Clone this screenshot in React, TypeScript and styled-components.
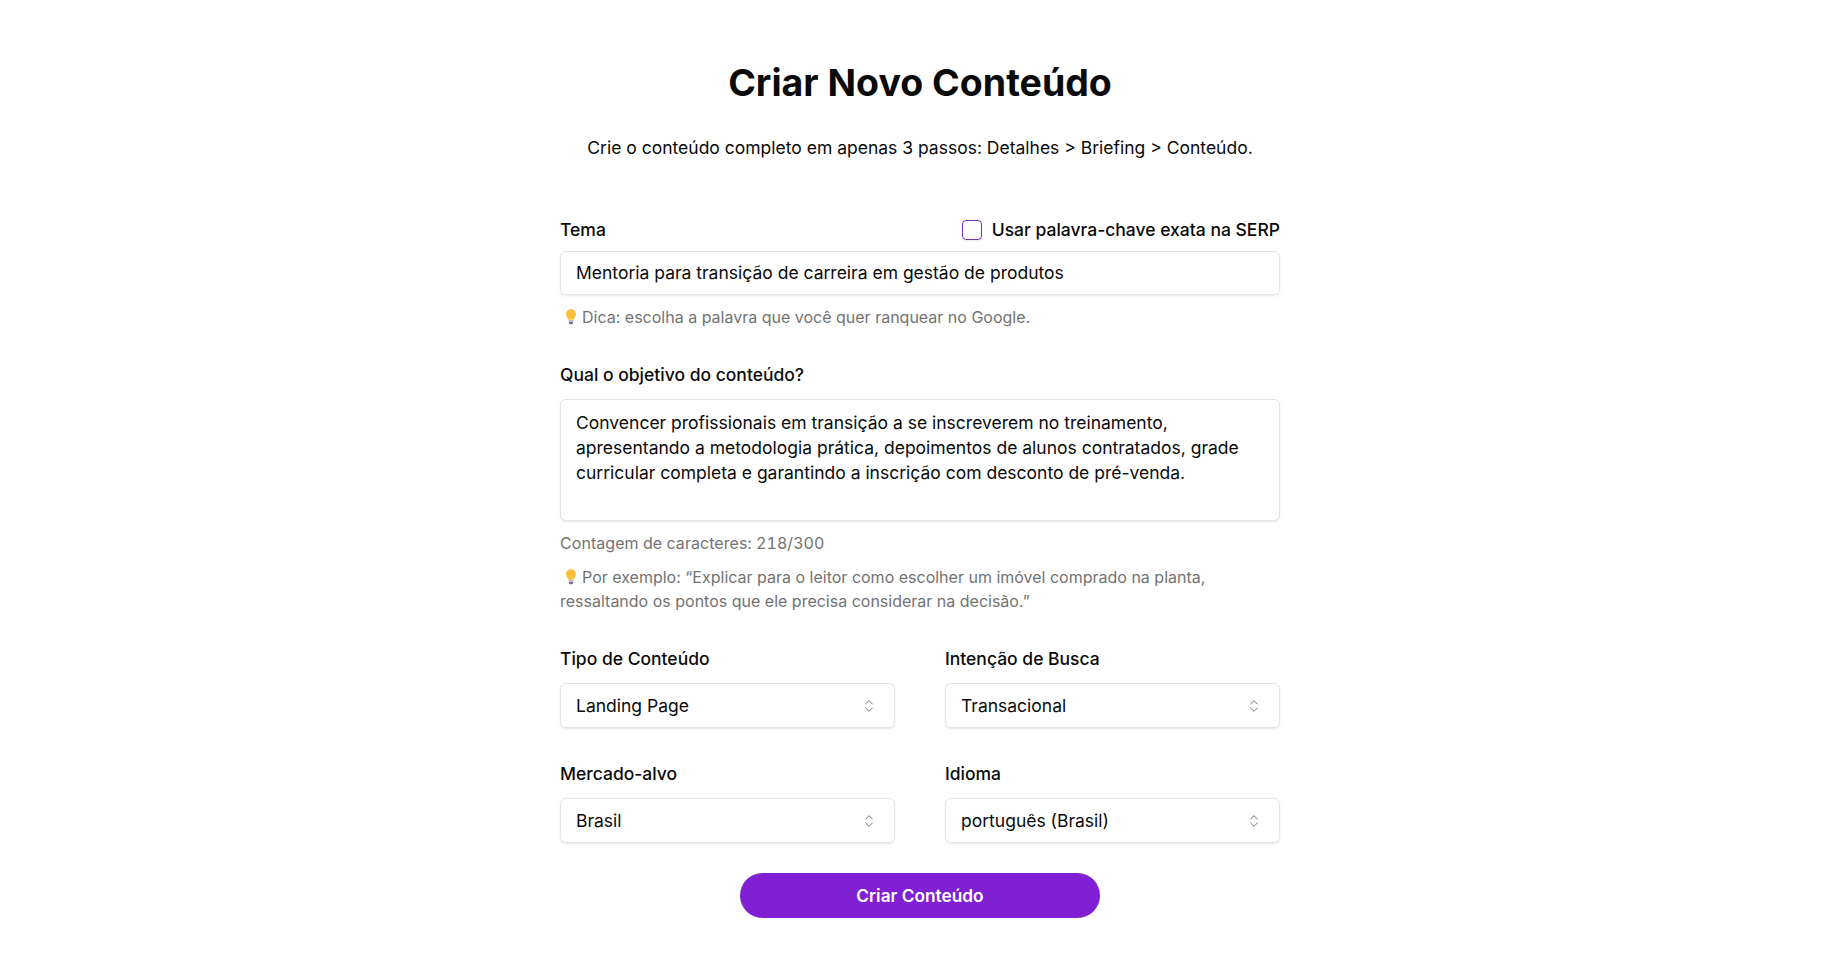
import React from 'react'
import styled, { createGlobalStyle } from 'styled-components'
import { ChevronsUpDown } from 'lucide-react'

const GlobalStyle = createGlobalStyle`
  * {
    box-sizing: border-box;
  }

  body {
    margin: 0;
    background: #fff;
    color: #0a0a0a;
    font-family: Inter, "Liberation Sans", sans-serif;
  }
`

const Page = styled.main`
  width: 720px;
  margin: 0 auto;
  padding-top: 63px;
`

const Title = styled.h1`
  margin: 0;
  font-size: 37.5px;
  line-height: 40px;
  font-weight: 700;
  text-align: center;
`

const Subtitle = styled.p`
  margin: 33px 0 0;
  font-size: 17.5px;
  line-height: 24px;
  text-align: center;
`

const Form = styled.form`
  display: flex;
  flex-direction: column;
  margin-top: 58px;
`

const Field = styled.div<{ $top?: number }>`
  margin-top: ${(p) => p.$top ?? 0}px;
  min-width: 0;
`

const LabelRow = styled.div`
  display: flex;
  align-items: center;
  justify-content: space-between;
  height: 24px;
`

const Label = styled.label`
  display: block;
  font-size: 17.5px;
  line-height: 24px;
  font-weight: 500;
`

const CheckWrap = styled.label`
  display: flex;
  align-items: center;
  gap: 10px;
  font-size: 17.5px;
  line-height: 24px;
  font-weight: 500;
`

const CheckBox = styled.span`
  width: 20px;
  height: 20px;
  border: 1.5px solid #7a35bd;
  border-radius: 4px;
  box-shadow: 0 1px 2px rgba(0, 0, 0, 0.08);
`

const TextInput = styled.input`
  display: block;
  width: 100%;
  height: 44px;
  margin-top: 9px;
  padding: 0 15px 2px;
  border: 1px solid #e5e5e5;
  border-radius: 6px;
  background: #fff;
  box-shadow: 0 1px 2px rgba(0, 0, 0, 0.1);
  color: #0a0a0a;
  font: 400 17.5px/24px Inter, "Liberation Sans", sans-serif;
  outline: none;
`

const TextArea = styled.textarea`
  display: block;
  width: 100%;
  height: 122px;
  margin-top: 12px;
  padding: 10px 15px;
  border: 1px solid #e5e5e5;
  border-radius: 6px;
  background: #fff;
  box-shadow: 0 1px 2px rgba(0, 0, 0, 0.1);
  color: #0a0a0a;
  font: 400 17.5px/25px Inter, "Liberation Sans", sans-serif;
  outline: none;
  resize: none;
`

const Hint = styled.p<{ $top: number }>`
  margin: ${(p) => p.$top}px 0 0;
  color: #737373;
  font-size: 16px;
  line-height: 24px;
`

const Counter = styled(Hint)`
  font-variant-numeric: tabular-nums;
  letter-spacing: 0.05px;
`

const Bulb = styled.svg`
  display: inline-block;
  width: 18px;
  height: 18px;
  margin: 0 2px 0 2px;
  vertical-align: -3px;
`

const Grid = styled.div`
  display: grid;
  grid-template-columns: 1fr 1fr;
  column-gap: 50px;
  row-gap: 34px;
  margin-top: 34px;
`

const SelectBox = styled.button`
  display: flex;
  align-items: center;
  justify-content: space-between;
  width: 100%;
  height: 45px;
  margin-top: 12px;
  padding: 0 17px 0 15px;
  border: 1px solid #e5e5e5;
  border-radius: 6px;
  background: #fff;
  box-shadow: 0 1px 2px rgba(0, 0, 0, 0.1);
  color: #0a0a0a;
  font: 400 17.5px/24px Inter, "Liberation Sans", sans-serif;

  svg {
    color: #737373;
  }
`

const Submit = styled.button`
  display: block;
  width: 360px;
  height: 45px;
  margin: 30px auto 0;
  border: 0;
  border-radius: 23px;
  background: #8120d2;
  box-shadow: 0 1px 2px rgba(0, 0, 0, 0.06);
  color: #fff;
  font: 600 17.3px/24px Inter, "Liberation Sans", sans-serif;
`

const BulbIcon: React.FC = () => (
  <Bulb viewBox="0 0 16 16" aria-hidden="true">
    <path
      d="M8 1C5.400 1 3.600 3 3.600 5.300c0 2 1.400 3.100 2 5.200h4.800c.6-2.100 2-3.200 2-5.200C12.400 3 10.600 1 8 1z"
      fill="#fbbf3c"
    />
    <path d="M5.800 10.800h4.400v1.400H5.800z" fill="#b9a7c9" />
    <path d="M6.200 12.400h3.600v1.400c-.5.8-3.100.8-3.600 0z" fill="#7d6a94" />
  </Bulb>
)

const selects = [
  { label: 'Tipo de Conteúdo', value: 'Landing Page' },
  { label: 'Intenção de Busca', value: 'Transacional' },
  { label: 'Mercado-alvo', value: 'Brasil' },
  { label: 'Idioma', value: 'português (Brasil)' },
]

const App: React.FC = () => {
  return (
    <>
      <GlobalStyle />
      <Page>
        <Title>Criar Novo Conteúdo</Title>
        <Subtitle>
          Crie o conteúdo completo em apenas 3 passos: Detalhes &gt; Briefing
          &gt; Conteúdo.
        </Subtitle>
        <Form>
          <Field>
            <LabelRow>
              <Label>Tema</Label>
              <CheckWrap>
                <CheckBox />
                Usar palavra-chave exata na SERP
              </CheckWrap>
            </LabelRow>
            <TextInput
              readOnly
              value="Mentoria para transição de carreira em gestão de produtos"
            />
            <Hint $top={10}>
              <BulbIcon />
              Dica: escolha a palavra que você quer ranquear no Google.
            </Hint>
          </Field>
          <Field $top={34}>
            <Label>Qual o objetivo do conteúdo?</Label>
            <TextArea
              readOnly
              value="Convencer profissionais em transição a se inscreverem no treinamento, apresentando a metodologia prática, depoimentos de alunos contratados, grade curricular completa e garantindo a inscrição com desconto de pré-venda."
            />
            <Counter $top={10}>Contagem de caracteres: 218/300</Counter>
            <Hint $top={10}>
              <BulbIcon />
              Por exemplo: “Explicar para o leitor como escolher um imóvel
              comprado na planta, ressaltando os pontos que ele precisa
              considerar na decisão.”
            </Hint>
          </Field>
          <Grid>
            {selects.map((item) => (
              <Field key={item.label}>
                <Label>{item.label}</Label>
                <SelectBox type="button">
                  {item.value}
                  <ChevronsUpDown size={16} strokeWidth={1.5} />
                </SelectBox>
              </Field>
            ))}
          </Grid>
          <Submit type="button">Criar Conteúdo</Submit>
        </Form>
      </Page>
    </>
  )
}

export default App
